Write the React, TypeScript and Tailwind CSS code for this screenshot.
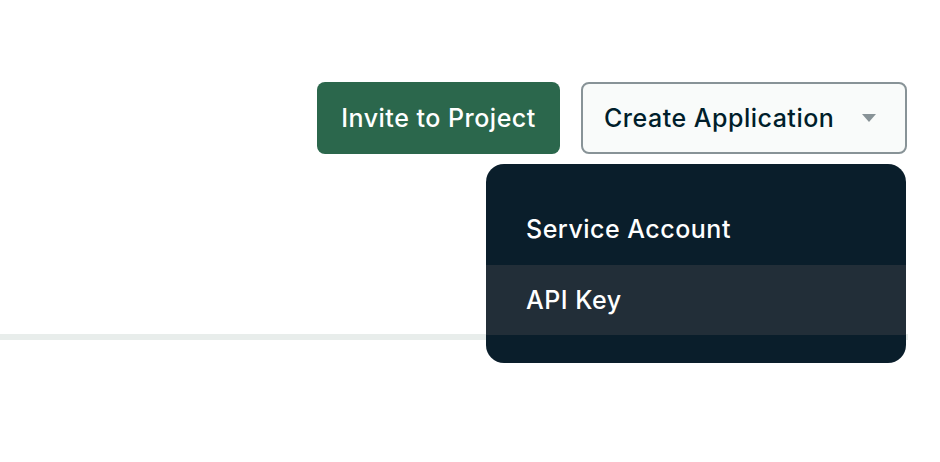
import { useState } from 'react'

const ITEMS = ['Service Account', 'API Key']

export default function App() {
  const [hover] = useState('API Key')

  return (
    <div className="relative w-[940px] h-[462px] bg-white overflow-hidden" style={{ fontFamily: 'Inter, "Noto Sans", sans-serif' }}>
      <div className="flex justify-end gap-[21px] pt-[82px] pr-[33px]">
        <button className="h-[72px] w-[243px] rounded-[8px] bg-[#2b674c] text-white text-[25px] font-medium tracking-[0.5px] pt-[2px]">
          Invite to Project
        </button>
        <button className="h-[72px] w-[326px] rounded-[8px] border-2 border-[#889397] bg-[#f9fbfa] text-[#001e2b] text-[25px] font-medium tracking-[0.5px] flex items-center justify-between pl-[21px] pr-[28px]">
          <span className="pt-[2px]">Create Application</span>
          <svg width="16" height="10" viewBox="0 0 16 10">
            <path d="M1 1h14L8 9z" fill="#889397" />
          </svg>
        </button>
      </div>
      <div className="mt-[180px] h-[6px] w-[908px] bg-[#e8edeb]" />

      <div className="absolute top-[164px] left-[486px] w-[420px] rounded-[18px] bg-[#0a1e2b] pt-[30px] pb-[28px]">
        {ITEMS.map(item => (
          <div key={item}
            className={`h-[70.5px] flex items-center pl-[40px] pt-[1px] text-white text-[25px] font-medium tracking-[0.5px] ${hover === item ? 'bg-[#222e38]' : ''}`}>
            {item}
          </div>
        ))}
      </div>
    </div>
  )
}
